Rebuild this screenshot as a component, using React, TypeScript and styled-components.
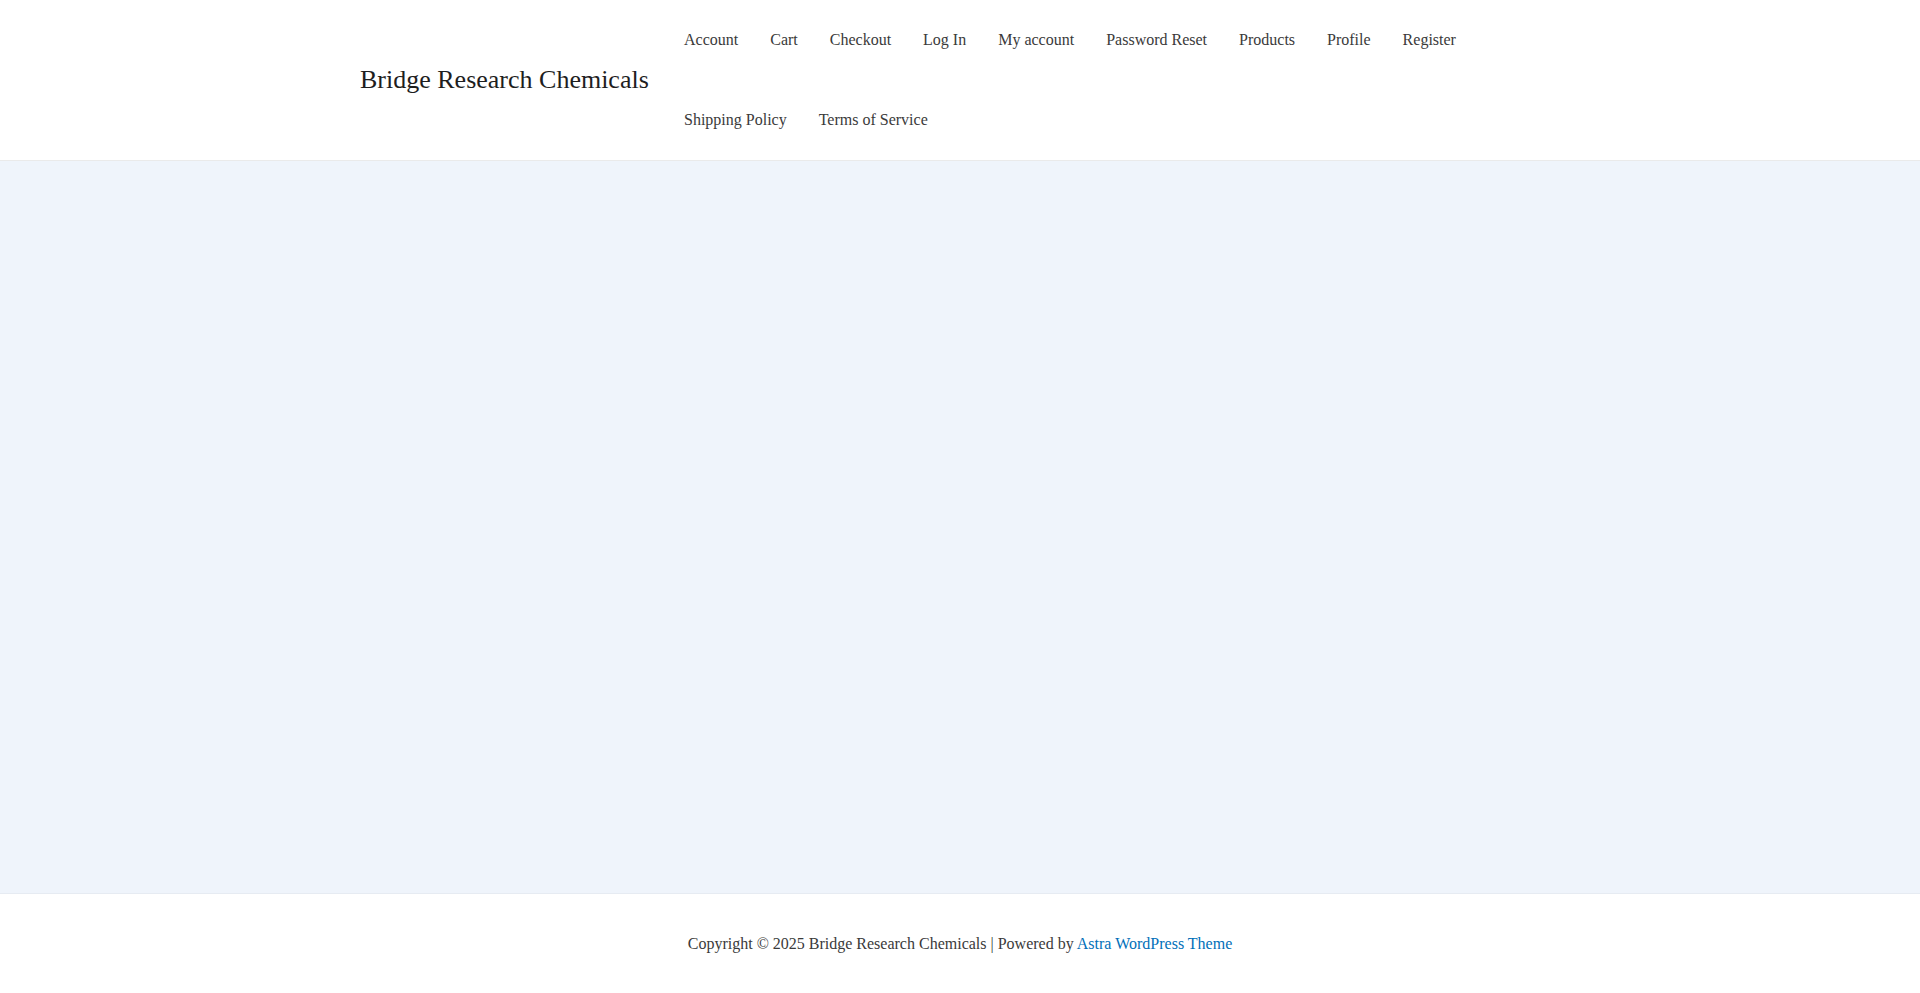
import React from "react";
import styled, { createGlobalStyle } from "styled-components";

const Global = createGlobalStyle`
  html, body { margin: 0; padding: 0; }
  body { font-family: "Liberation Serif", "Times New Roman", serif; color: #3a3a3a; }
  * { box-sizing: border-box; }
`;

const Page = styled.div`
  display: flex;
  flex-direction: column;
  min-height: 100vh;
  background: #fff;
`;

const Header = styled.header`
  background: #fff;
  border-bottom: 1px solid #eaeaea;
  height: 161px;
`;

const Container = styled.div`
  width: 1200px;
  margin: 0 auto;
  display: flex;
  align-items: center;
  height: 160px;
`;

const Brand = styled.a`
  width: 308px;
  flex-shrink: 0;
  font-size: 26px;
  color: #1e1e1e;
  text-decoration: none;
  line-height: 1.2;
`;

const Menu = styled.ul`
  list-style: none;
  margin: 0;
  padding: 0;
  display: flex;
  flex-wrap: wrap;
  align-content: flex-start;
  flex: 1;
  height: 160px;
`;

const Item = styled.li`
  a {
    display: block;
    padding: 0 16px;
    line-height: 80px;
    font-size: 16px;
    color: #3a3a3a;
    text-decoration: none;
  }
`;

const Main = styled.main`
  flex: 1;
  background: #eff4fb;
`;

const Footer = styled.footer`
  height: 100px;
  background: #fff;
  border-top: 1px solid #e6ebf2;
  display: flex;
  align-items: center;
  justify-content: center;
  font-size: 16px;
  color: #3a3a3a;
  a { color: #0170b9; text-decoration: none; }
`;

const items = ["Account", "Cart", "Checkout", "Log In", "My account", "Password Reset", "Products", "Profile", "Register", "Shipping Policy", "Terms of Service"];

export default function App() {
  return (
    <Page>
      <Global />
      <Header>
        <Container>
          <Brand href="#">Bridge Research Chemicals</Brand>
          <Menu>
            {items.map((i) => (
              <Item key={i}><a href="#">{i}</a></Item>
            ))}
          </Menu>
        </Container>
      </Header>
      <Main />
      <Footer>
        <span>
          Copyright © 2025 Bridge Research Chemicals | Powered by <a href="#">Astra WordPress Theme</a>
        </span>
      </Footer>
    </Page>
  );
}
